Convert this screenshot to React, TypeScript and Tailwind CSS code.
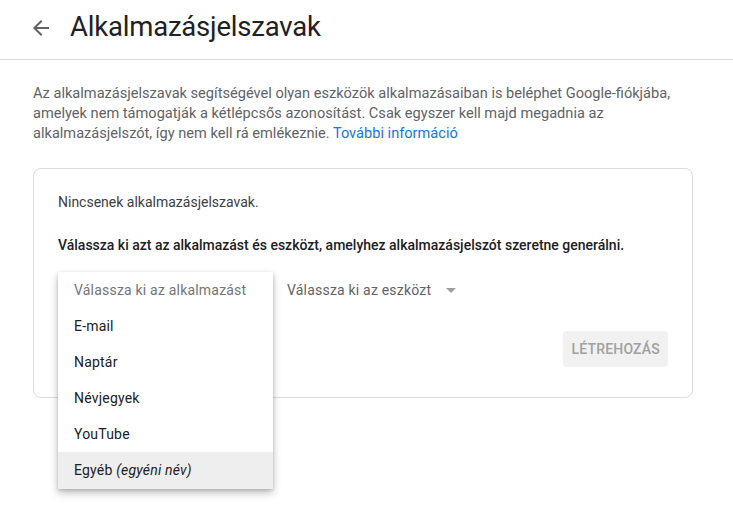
import React, { useState } from 'react';

const apps = ['E-mail', 'Naptár', 'Névjegyek', 'YouTube'];

const AppPasswords: React.FC = () => {
  const [open] = useState(true);

  return (
    <div className="min-h-[514px] bg-white font-['Roboto',sans-serif] text-[#202124]">
      <div className="flex h-[60px] items-center border-b border-[#dadce0] pl-[29px]">
        <svg width="24" height="24" viewBox="0 0 24 24" className="mt-[-3px] fill-[#5f6368]">
          <path d="M20 11H7.83l5.59-5.59L12 4l-8 8 8 8 1.41-1.41L7.83 13H20v-2z" />
        </svg>
        <h1 className="ml-[17px] mt-[-6px] text-[27.5px] font-normal tracking-[-0.2px] text-[#202124]">
          Alkalmazásjelszavak
        </h1>
      </div>

      <div className="px-[33px]">
        <p className="mt-[23px] max-w-[645px] text-[14.6px] leading-[20px] text-[#5f6368]">
          Az alkalmazásjelszavak segítségével olyan eszközök alkalmazásaiban is beléphet Google-fiókjába, amelyek nem
          támogatják a kétlépcsős azonosítást. Csak egyszer kell majd megadnia az alkalmazásjelszót, így nem kell rá
          emlékeznie. <a className="text-[#1a73e8]">További információ</a>
        </p>

        <div className="mt-[25px] w-[660px] rounded-lg border border-[#dadce0] px-6 pt-[23px] pb-[30px]">
          <p className="text-[14px] leading-[20px] text-[#3c4043]">Nincsenek alkalmazásjelszavak.</p>
          <p className="mt-[23px] text-[14px] font-medium leading-[20px] text-[#202124]">
            Válassza ki azt az alkalmazást és eszközt, amelyhez alkalmazásjelszót szeretne generálni.
          </p>

          <div className="relative mt-[17px] flex h-9 items-center">
            <div className="w-[215px] pl-4 text-[14px] tracking-[0.2px] text-[#757575]">Válassza ki az alkalmazást</div>
            <div className="ml-[14px] flex items-center text-[14px] tracking-[0.2px] text-[#5f6368]">
              Válassza ki az eszközt
              <svg width="10" height="5" viewBox="0 0 10 5" className="ml-[15px] fill-[#9e9e9e]">
                <path d="M0 0l5 5 5-5z" />
              </svg>
            </div>

            {open && (
              <ul className="absolute left-0 top-0 z-10 w-[215px] bg-white py-0 shadow-[0_4px_8px_rgba(0,0,0,0.25),0_1px_3px_rgba(0,0,0,0.15)]">
                <li className="flex h-9 items-center px-4 text-[14px] tracking-[0.2px] text-[#757575]">
                  Válassza ki az alkalmazást
                </li>
                {apps.map((app) => (
                  <li key={app} className="flex h-9 items-center px-4 text-[14px] tracking-[0.2px] text-[#202124]">
                    {app}
                  </li>
                ))}
                <li className="flex h-[37px] items-center bg-[#eeeeee] px-4 text-[14px] tracking-[0.2px] text-[#202124]">
                  Egyéb&nbsp;<span className="italic">(egyéni név)</span>
                </li>
              </ul>
            )}
          </div>

          <div className="mt-[23px] flex justify-end">
            <button className="h-9 rounded bg-[#f1f1f1] px-2 text-[14px] font-medium tracking-[0.2px] text-[#a0a0a0]">
              LÉTREHOZÁS
            </button>
          </div>
        </div>
      </div>
    </div>
  );
};

export default function App() {
  return <AppPasswords />;
}
